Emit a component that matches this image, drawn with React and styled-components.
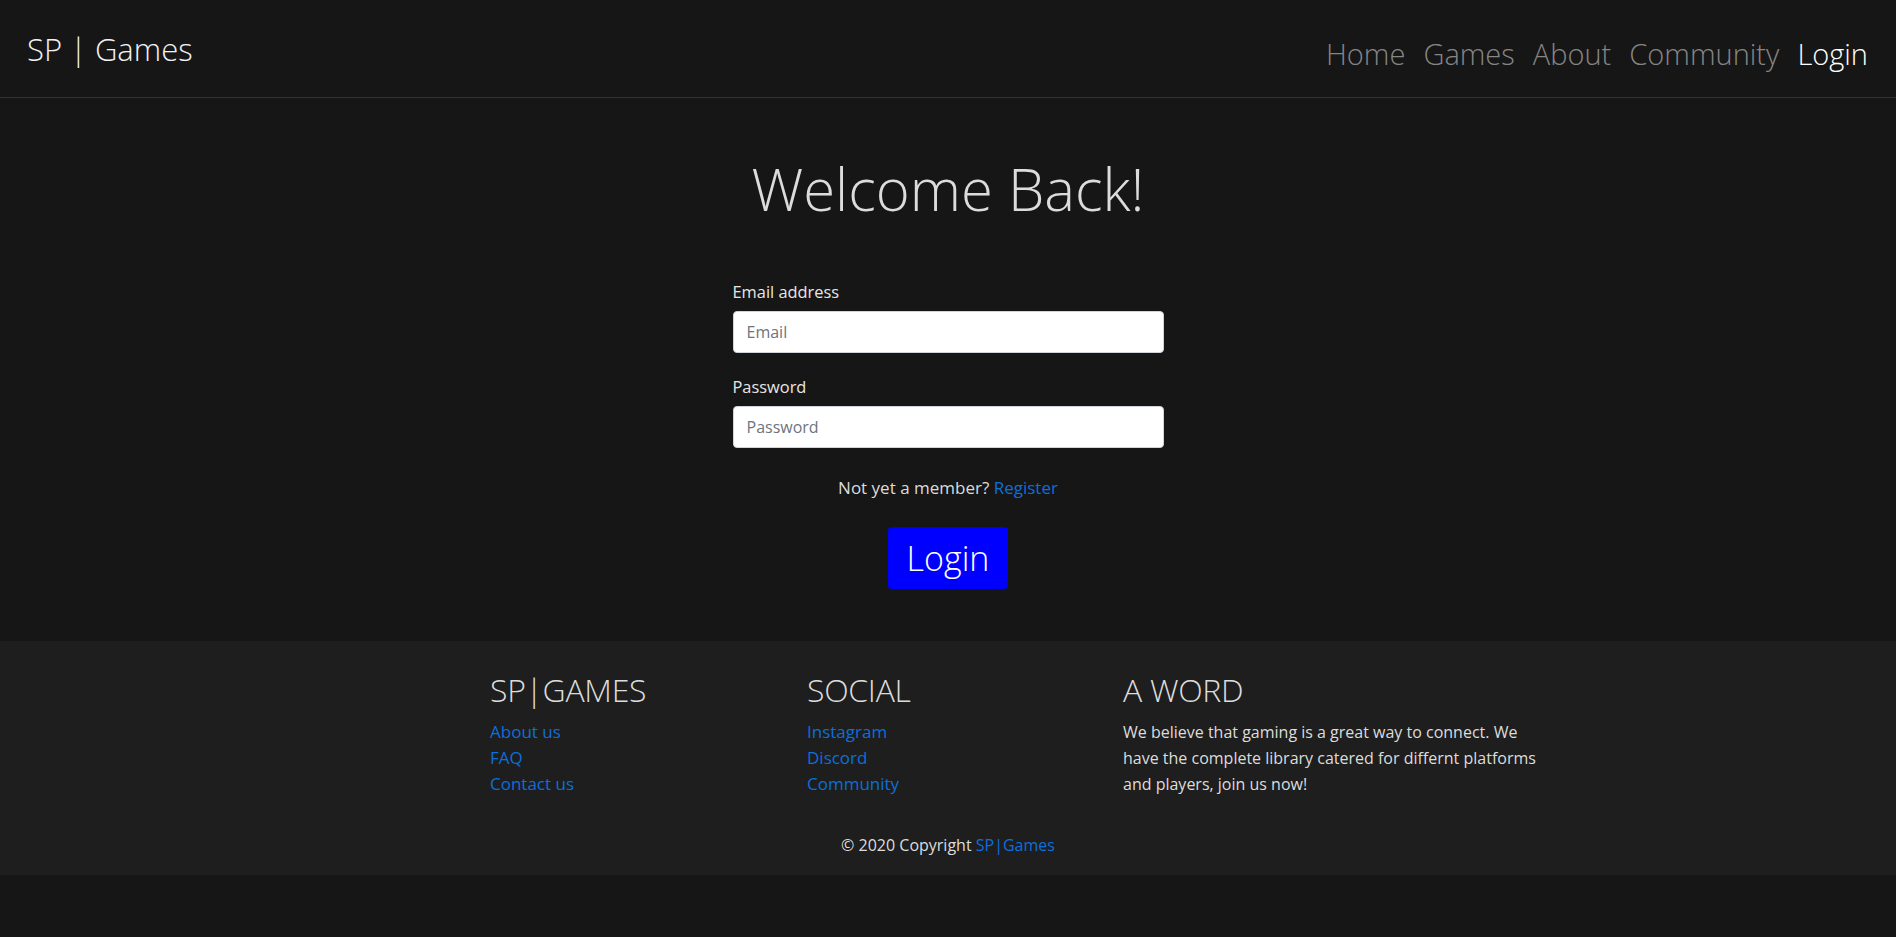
import React from 'react'
import styled, { createGlobalStyle } from 'styled-components'

const GlobalStyle = createGlobalStyle`
  html, body {
    margin: 0;
    background: #161616;
    font-family: 'Open Sans', 'Noto Sans', sans-serif;
    color: #dedede;
  }
  * {
    box-sizing: border-box;
  }
`

const Page = styled.div`
  min-height: 937px;
  display: flex;
  flex-direction: column;
  background: #161616;
`

const NavBar = styled.nav`
  height: 98px;
  display: flex;
  align-items: center;
  justify-content: space-between;
  padding: 0 28px 0 27px;
  border-bottom: 1px solid #333;
`

const Brand = styled.a`
  font-size: 31px;
  font-weight: 300;
  color: #f2f2f2;
  text-decoration: none;
`

const NavLinks = styled.div`
  display: flex;
  gap: 18px;
  padding-top: 10px;
`

const NavLink = styled.a`
  font-size: 29px;
  font-weight: 300;
  color: ${p => (p.active ? '#ffffff' : '#858585')};
  text-decoration: none;
`

const Main = styled.main`
  display: flex;
  flex-direction: column;
  align-items: center;
  padding: 56px 0 52px;
`

const Title = styled.h1`
  margin: 0 0 56px;
  font-size: 58px;
  font-weight: 300;
  color: #dcdcdc;
  line-height: 1.2;
`

const Form = styled.form`
  width: 431px;
  display: flex;
  flex-direction: column;
`

const Field = styled.div`
  display: flex;
  flex-direction: column;
  margin-bottom: 22px;
`

const Label = styled.label`
  font-size: 16.4px;
  color: #e6e6e6;
  margin-bottom: 8px;
`

const Input = styled.input`
  height: 42px;
  border: 1px solid #ced4da;
  border-radius: 4px;
  padding: 0 13px;
  font-family: inherit;
  font-size: 16px;
  color: #495057;
  background: #fff;
  outline: none;

  &::placeholder {
    color: #6c757d;
  }
`

const Prompt = styled.p`
  margin: 6px 0 0;
  text-align: center;
  font-size: 17px;
  color: #dcdcdc;
`

const Link = styled.a`
  color: #0b6fdc;
  text-decoration: none;
`

const SubmitRow = styled.div`
  display: flex;
  justify-content: center;
  margin-top: 28px;
`

const LoginButton = styled.button`
  width: 120px;
  height: 62px;
  border: none;
  border-radius: 4px;
  background: #0000ff;
  color: #fff;
  font-family: inherit;
  font-size: 34px;
  font-weight: 300;
  cursor: pointer;
`

const Footer = styled.footer`
  background: #1e1e1e;
  padding: 27px 0 0;
`

const FooterGrid = styled.div`
  display: grid;
  grid-template-columns: 317px 316px 428px;
  padding-left: 490px;
`

const FooterCol = styled.div`
  display: flex;
  flex-direction: column;
`

const FooterHeading = styled.h3`
  margin: 0 0 8px;
  font-size: 32px;
  font-weight: 300;
  color: #dcdcdc;
  letter-spacing: -0.3px;
`

const FooterLink = styled.a`
  font-size: 17px;
  line-height: 26px;
  color: #0b6fdc;
  text-decoration: none;
`

const FooterText = styled.p`
  margin: 0;
  font-size: 16px;
  line-height: 26px;
  color: #dcdcdc;
`

const Copyright = styled.div`
  text-align: center;
  font-size: 16px;
  color: #dcdcdc;
  padding: 37px 0 19px;
`

const navItems = ['Home', 'Games', 'About', 'Community', 'Login']

export default function App() {
  return (
    <Page>
      <GlobalStyle />
      <NavBar>
        <Brand href="#">SP | Games</Brand>
        <NavLinks>
          {navItems.map(item => (
            <NavLink key={item} href="#" active={item === 'Login' ? 1 : 0}>
              {item}
            </NavLink>
          ))}
        </NavLinks>
      </NavBar>
      <Main>
        <Title>Welcome Back!</Title>
        <Form onSubmit={e => e.preventDefault()}>
          <Field>
            <Label>Email address</Label>
            <Input type="email" placeholder="Email" />
          </Field>
          <Field>
            <Label>Password</Label>
            <Input type="password" placeholder="Password" />
          </Field>
          <Prompt>
            Not yet a member? <Link href="#">Register</Link>
          </Prompt>
          <SubmitRow>
            <LoginButton type="submit">Login</LoginButton>
          </SubmitRow>
        </Form>
      </Main>
      <Footer>
        <FooterGrid>
          <FooterCol>
            <FooterHeading>SP|GAMES</FooterHeading>
            <FooterLink href="#">About us</FooterLink>
            <FooterLink href="#">FAQ</FooterLink>
            <FooterLink href="#">Contact us</FooterLink>
          </FooterCol>
          <FooterCol>
            <FooterHeading>SOCIAL</FooterHeading>
            <FooterLink href="#">Instagram</FooterLink>
            <FooterLink href="#">Discord</FooterLink>
            <FooterLink href="#">Community</FooterLink>
          </FooterCol>
          <FooterCol>
            <FooterHeading>A WORD</FooterHeading>
            <FooterText>
              We believe that gaming is a great way to connect. We have the complete library
              catered for differnt platforms and players, join us now!
            </FooterText>
          </FooterCol>
        </FooterGrid>
        <Copyright>
          © 2020 Copyright <Link href="#">SP|Games</Link>
        </Copyright>
      </Footer>
    </Page>
  )
}
